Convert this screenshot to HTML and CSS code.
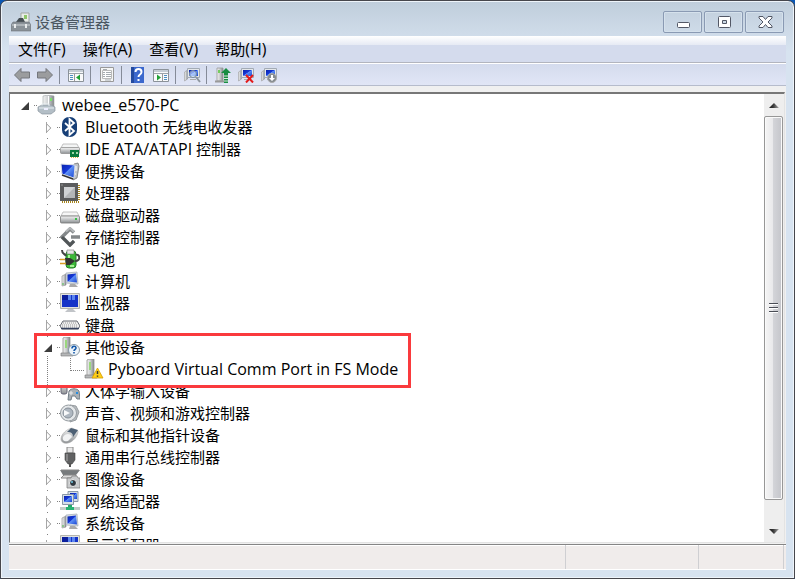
FILE: index.html
```html
<!DOCTYPE html>
<html lang="zh-CN">
<head>
<meta charset="utf-8">
<title>设备管理器</title>
<link rel="stylesheet" href="styles.css">
</head>
<body>
<svg class="defs" aria-hidden="true">
  <defs>
    <linearGradient id="metal" x1="0" x2="1"><stop stop-color="#f4f4f4"/><stop offset=".5" stop-color="#c8cbcd"/><stop offset="1" stop-color="#84888b"/></linearGradient>
    <linearGradient id="metalDown" x2="0" y2="1"><stop stop-color="#f6f6f6"/><stop offset="1" stop-color="#8d9194"/></linearGradient>
    <linearGradient id="screen" x1="0" y1="0" x2="1" y2="1"><stop stop-color="#0923a8"/><stop offset=".45" stop-color="#1638d8"/><stop offset=".5" stop-color="#5d8ff5"/><stop offset="1" stop-color="#1a46d2"/></linearGradient>
    <linearGradient id="arrowHead" x1="0" x2="1"><stop stop-color="#222"/><stop offset=".4" stop-color="#333"/><stop offset="1" stop-color="#aaa"/></linearGradient>
    <symbol id="i-pc" viewBox="0 0 20 20"><path d="M6 1l5-1 6 1v13l-5 1-6-2z" fill="url(#metal)" stroke="#a0a4a6" stroke-width=".6"/><path d="M11.500 1v12" stroke="#fff"/><path d="M13 3h2v3h-2z" fill="#7be06c"/><path d="M1 12l4-2h9l4 2v4l-4 3H5l-4-3z" fill="#b3bec6" stroke="#8b959d" stroke-width=".7"/><path d="M2 13h15M5 10.500V9h7v2" stroke="#e8eef2" fill="none"/><path d="M7 13h4v2H7z" fill="#eef"/></symbol>
    <symbol id="i-bt" viewBox="0 0 20 20"><rect x="2" y="0" width="15" height="20" rx="7" fill="#173f77"/><path d="M5 6l9 8-4.500 4V2L14 6l-9 8" fill="none" stroke="#fff" stroke-width="1.800"/></symbol>
    <symbol id="i-ide" viewBox="0 0 20 20"><path d="M3 5h14l2 4H1z" fill="#f4f5f5" stroke="#aaa" stroke-width=".7"/><rect x=".500" y="8.500" width="19" height="6" rx="1" fill="url(#metalDown)" stroke="#888" stroke-width=".7"/><path d="M10 11h9v7h-9z" fill="#087a3c"/><path d="M12 13h2v2h-2zM16 13h2v2h-2z" fill="#9ed6a8"/><path d="M11 18.500h7" stroke="#dbb54b" stroke-dasharray="1 1"/></symbol>
    <symbol id="i-portable" viewBox="0 0 20 20"><path d="M14 3l4-1 1 3-2 12-4 2z" fill="#bfc3c6" stroke="#666" stroke-width=".7"/><path d="M1 3l14 1-1 13-12-4z" fill="url(#screen)" stroke="#d9dde4"/><path d="M2 14l11 4" stroke="#333" stroke-width="1.500"/><path d="M16 5v5M15 13h1" stroke="#fff"/></symbol>
    <symbol id="i-cpu" viewBox="0 0 20 20"><path d="M2 19h17M19 2v16" stroke="#a7861f" stroke-width="2" stroke-dasharray="1 1"/><path d="M0 0h18v18H0z" fill="#5b5c5d"/><path d="M4 4h11v11H4z" fill="#b4b6b8"/><path d="M4 15V4h11z" fill="#d0d2d4"/><path d="M1 1h2v2H1z" fill="#777"/></symbol>
    <symbol id="i-disk" viewBox="0 0 20 20"><path d="M3 7h14l2 4H1z" fill="#f6f6f6" stroke="#aaa" stroke-width=".7"/><rect x=".500" y="11" width="19" height="7" rx="1" fill="url(#metalDown)" stroke="#777" stroke-width=".8"/><path d="M15 13h2v2h-2z" fill="#39bd49"/></symbol>
    <symbol id="i-storage" viewBox="0 0 20 20"><path d="M14 5.500L10 2l-8 8 8 8 4-4M11 10h9" fill="none" stroke="#84888a" stroke-width="3.500"/><path d="M2 10l8 8 4-4" fill="none" stroke="#515658" stroke-width="3"/><path d="M6 4.500L10 1l4 4" fill="none" stroke="#b4b7b9" stroke-width="2"/></symbol>
    <symbol id="i-battery" viewBox="0 0 20 20"><rect x="6" y="2" width="10" height="17" rx="3" fill="#3cb838" stroke="#277f28"/><path d="M7 1h7v4H7z" fill="#e8e8e8" stroke="#777" stroke-width=".6"/><path d="M9 6v4M10 17h4" stroke="#a5f293" stroke-width="2"/><path d="M2 1c0 5 3 3 4 6M15 12c7 0 4-8 1-6" fill="none" stroke="#444" stroke-width="2"/><path d="M5 9h5l5 3-5 4H6z" fill="#333"/><path d="M0 10.500h5M0 14.500h6" stroke="#d89c23" stroke-width="1.500"/></symbol>
    <symbol id="i-computer" viewBox="0 0 20 20"><path d="M2 5l4-2v11l-4 1z" fill="url(#metal)" stroke="#888" stroke-width=".6"/><path d="M6 2l11-1 1 12-12-1z" fill="#d8dde2" stroke="#a0aab5" stroke-width=".7"/><path d="M7.500 3.500l8.500-1 1 9-9.500-1z" fill="url(#screen)"/><path d="M10 13h5l3 3H9z" fill="#aaa"/><path d="M3 12v2" stroke="#48b848"/></symbol>
    <symbol id="i-monitor" viewBox="0 0 20 20"><path d="M.500.500h19v15H.500z" fill="#e3e3df" stroke="#b4b5af"/><path d="M2 2h16v12H2z" fill="#1634c8"/><path d="M2 2h6v5H2z" fill="#0c1f9c"/><path d="M8 2h7v5H8z" fill="#5c86ee"/><path d="M11 2h1v5h-1z" fill="#1634c8"/><path d="M8 16h5l3 3H5z" fill="#c1c4c8"/></symbol>
    <symbol id="i-keyboard" viewBox="0 0 20 20"><path d="M3 6h14l3 5-2 3H2l-2-3z" fill="#eee" stroke="#676b73"/><path d="M3 8h14M2 10h16M2 12h16" stroke="#999" stroke-dasharray="1 1"/><path d="M1 13.500h18" stroke="#35415d" stroke-width="1.500"/></symbol>
    <symbol id="i-tower" viewBox="0 0 20 20"><path d="M3 1l2-1h5v17H3z" fill="url(#metal)" stroke="#909090" stroke-width=".8"/><path d="M5 3h2v8H5z" fill="#9bd77f"/><path d="M1 16h12v3H1z" fill="#b5b7b8" stroke="#777" stroke-width=".6"/></symbol>
    <symbol id="i-unknown" viewBox="0 0 20 20"><use href="#i-tower"/><circle cx="14" cy="13" r="5.500" fill="#edf4fa" stroke="#8998a5"/><path d="M12 11.500c0-3 4-3 4-.500 0 1.500-2 1.500-2 3M14 15v1.500" fill="none" stroke="#1559aa" stroke-width="1.600"/></symbol>
    <symbol id="i-warning" viewBox="0 0 20 20"><use href="#i-tower"/><path d="M13.500 9L19 19H8z" fill="#ffcf18" stroke="#d69c00" stroke-width=".8"/><path d="M13.500 12v3M13.500 16.500v1.300" stroke="#333" stroke-width="1.500"/></symbol>
    <symbol id="i-hid" viewBox="0 0 20 20"><rect x="1" y="1" width="6" height="12" rx="2" fill="url(#metalDown)" stroke="#667"/><path d="M4 0v6" stroke="#445" stroke-width="2"/><path d="M9 10c2-3 8-3 10 0l1 8h-3l-2-3h-3l-1 4H8z" fill="#a9b0b6" stroke="#737e87"/><path d="M11 10v4M9 12h4" stroke="#eee"/><path d="M16 12h2" stroke="#278ee1" stroke-width="2"/></symbol>
    <symbol id="i-speaker" viewBox="0 0 20 20"><path d="M10 2l6 1 3 6-3 8-6 2z" fill="#b8bcc0" stroke="#979ca0"/><circle cx="8.500" cy="10" r="8" fill="#e4e7e9" stroke="#969ca1"/><circle cx="8" cy="10" r="5" fill="#aeb7c0" stroke="#858e97"/><path d="M4 7l6 3-6 3z" fill="#f8f9fa"/></symbol>
    <symbol id="i-mouse" viewBox="0 0 20 20"><path d="M1 14C1 9 7 4 12 3l6 3c0 5-5 11-10 12-4 1-7-1-7-4z" fill="url(#metalDown)" stroke="#aaa" stroke-width=".6"/><path d="M11 3l7 2-5 7c0-4-2-5-6-5z" fill="#4d6074"/><path d="M3 12c2-4 8-4 9 0l-4 4c-3 1-6 0-5-4z" fill="#f2f3f4"/></symbol>
    <symbol id="i-usb" viewBox="0 0 20 20"><path d="M7 0h6v6H7z" fill="#e7e7e7" stroke="#888"/><path d="M5 6h10v7l-3 4H8l-3-4z" fill="#606162" stroke="#444" stroke-width=".6"/><path d="M7 7v7" stroke="#aaa"/><path d="M10 16v4" stroke="#555" stroke-width="2"/></symbol>
    <symbol id="i-imaging" viewBox="0 0 20 20"><path d="M0 1h20l-4 5H3z" fill="#777b7d"/><path d="M1 1h18M4 6h12v3H1z" fill="#ddd" stroke="#888"/><path d="M7 9h4l1-2h5l1 2h2v10H7z" fill="#c9cbcc" stroke="#777" stroke-width=".7"/><circle cx="13" cy="14" r="3.500" fill="#303940" stroke="#eee"/><circle cx="12" cy="13" r="1" fill="#72c8e3"/></symbol>
    <symbol id="i-network" viewBox="0 0 20 20"><path d="M8 .500h10v10H8z" fill="#d6dfe7" stroke="#8997a7"/><path d="M10 2h7v6h-7z" fill="url(#screen)"/><path d="M2.500 3.500h11v10h-11z" fill="#d6dfe7" stroke="#8997a7"/><path d="M4 5h8v6H4z" fill="url(#screen)"/><path d="M8 14h4v4H8z" fill="#25a968"/><path d="M0 17.500h20" stroke="#c2cbc7" stroke-width="3"/><path d="M6 17.500h8" stroke="#28b373" stroke-width="3"/></symbol>
    <symbol id="i-panel" viewBox="0 0 18 16"><path d="M1.500 2.500h15v12h-15z" fill="#f9fafb" stroke="#8b9299"/><path d="M2 3h14v2H2z" fill="#c5cdd5"/><path d="M2 6.500h14" stroke="#9ba3aa"/></symbol>
    <symbol id="i-station" viewBox="0 0 18 16"><path d="M1.500 5l3-2v9l-3 2z" fill="url(#metal)" stroke="#999" stroke-width=".6"/><path d="M4.500 1.500h12v9h-12z" fill="#e4e7ea" stroke="#a3abb5"/><path d="M6 3h9v6H6z" fill="url(#screen)"/><path d="M7 12h6v1H7z" fill="#aaa"/></symbol>
  </defs>
</svg>
<div class="window">
  <header class="titlebar">
    <svg class="app-icon" viewBox="0 0 20 20"><path d="M10 1h8v12h-8z" fill="#e9ece8" stroke="#a0a5a3"/><path d="M13 3h3v4h-3z" fill="#8fc66b"/><path d="M5 10l3-4h4l2 4" fill="#454e53"/><path d="M2 10h16l2 3v6H0v-6z" fill="#8a9298" stroke="#6c747a" stroke-width=".6"/><path d="M1 13h18" stroke="#d0d5d8"/><path d="M4 12v4M15 12v4" stroke="#e8ebec" stroke-width="2"/></svg>
    <h1>设备管理器</h1>
    <div class="controls">
      <button aria-label="最小化"><svg viewBox="0 0 20 20"><rect x="4.500" y="10.500" width="12" height="5" rx="1" fill="#fff" stroke="#535866"/></svg></button>
      <button aria-label="最大化"><svg viewBox="0 0 20 20"><rect x="4.500" y="4.500" width="12" height="11" rx="1" fill="#fff" stroke="#535866"/><path d="M8.500 8.500h4v3h-4z" fill="#cbd9e5" stroke="#535866"/></svg></button>
      <button aria-label="关闭"><svg viewBox="0 0 20 20"><path d="M4 4.500h4l2.500 3 2.500-3h4v1.500L13 10l4 4v1.500h-4l-2.500-3-2.500 3H4V14l4-4-4-4z" fill="#fff" stroke="#535866"/></svg></button>
    </div>
  </header>
  <main class="client">
    <nav class="menu"><button>文件<span class="latin">(F)</span></button><button>操作<span class="latin">(A)</span></button><button>查看<span class="latin">(V)</span></button><button>帮助<span class="latin">(H)</span></button></nav>
    <div class="toolbar">
      <button aria-label="后退"><svg viewBox="0 0 18 16"><path d="M1.500 8L8 1.500V5h8.500v6H8v3.500z" fill="#9b9c9e" stroke="#74777c"/></svg></button>
      <button aria-label="前进"><svg viewBox="0 0 18 16"><path d="M16.500 8L10 1.500V5H1.500v6H10v3.500z" fill="#9b9c9e" stroke="#74777c"/></svg></button>
      <i></i>
      <button aria-label="显示控制台树"><svg viewBox="0 0 18 16"><use href="#i-panel"/><path d="M7.500 7v7" stroke="#999"/><path d="M3 8.500h3M3 10.500h3M3 12.500h3" stroke="#4b8fc2"/><path d="M13 7.500v6l-4-3z" fill="#21a135"/></svg></button>
      <i></i>
      <button aria-label="属性"><svg viewBox="0 0 18 16"><path d="M2.500 .500h13v14h-13z" fill="#f5f6f6" stroke="#999"/><path d="M4.500 3.500h9v8h-9z" fill="#fff" stroke="#bbb"/><path d="M5 2.500h4M8 5.500h5M8 7.500h5M8 9.500h5M5 5.500h2M5 7.500h2M5 9.500h2M7 13h6" stroke="#a5abb0"/></svg></button>
      <i></i>
      <button aria-label="帮助"><svg viewBox="0 0 18 16"><path d="M2 0h13v16H2z" fill="#3b68cd"/><path d="M2 0h3v16H2z" fill="#234a9f"/><path d="M6.500 5c0-4 6-4 6 0 0 3-3 2-3 5M9.500 12v2" fill="none" stroke="#fff" stroke-width="2"/></svg></button>
      <button aria-label="操作窗格"><svg viewBox="0 0 18 16"><use href="#i-panel"/><path d="M10.500 7v7" stroke="#999"/><path d="M12 8.500h3M12 10.500h3M12 12.500h3" stroke="#4b8fc2"/><path d="M5 7.500v6l4-3z" fill="#21a135"/></svg></button>
      <i></i>
      <button aria-label="扫描检测硬件改动"><svg viewBox="0 0 18 16"><use href="#i-station"/><circle cx="10" cy="7" r="3.500" fill="#dceeff" fill-opacity=".6" stroke="#778a9d"/><path d="M13 10l4 5" stroke="#8d969e" stroke-width="2"/></svg></button>
      <i></i>
      <button aria-label="更新驱动程序"><svg viewBox="0 0 18 16"><path d="M3 1h6v13H3z" fill="url(#metal)" stroke="#999" stroke-width=".8"/><path d="M4 3h2v3H4z" fill="#74cc60"/><path d="M1 14.500h10" stroke="#999" stroke-width="2"/><path d="M12 1l5 5h-3v10h-4V6H7z" fill="#188c42"/><path d="M10 9h4M10 11.500h4M10 14h4" stroke="#d8ead8"/></svg></button>
      <button aria-label="卸载"><svg viewBox="0 0 18 16"><use href="#i-station"/><path d="M9 8l7 7.500M16 8l-7 7.500" stroke="#e31b1b" stroke-width="2"/></svg></button>
      <button aria-label="禁用"><svg viewBox="0 0 18 16"><use href="#i-station"/><circle cx="12" cy="11" r="4.500" fill="#858b90" stroke="#aaa"/><path d="M11 8h2v3h2l-3 3-3-3h2z" fill="#fff"/></svg></button>
    </div>
    <section class="view">
      <div class="tree">
        <div class="row root"><button class="twist open" aria-label="折叠"></button><svg><use href="#i-pc"/></svg><span class="latin">webee_e570-PC</span></div>
        <ul>
          <li class="row"><button class="twist" aria-label="展开"></button><svg><use href="#i-bt"/></svg><span><span class="latin">Bluetooth</span> 无线电收发器</span></li>
          <li class="row"><button class="twist" aria-label="展开"></button><svg><use href="#i-ide"/></svg><span><span class="latin">IDE ATA/ATAPI</span> 控制器</span></li>
          <li class="row"><button class="twist" aria-label="展开"></button><svg><use href="#i-portable"/></svg><span>便携设备</span></li>
          <li class="row"><button class="twist" aria-label="展开"></button><svg><use href="#i-cpu"/></svg><span>处理器</span></li>
          <li class="row"><button class="twist" aria-label="展开"></button><svg><use href="#i-disk"/></svg><span>磁盘驱动器</span></li>
          <li class="row"><button class="twist" aria-label="展开"></button><svg><use href="#i-storage"/></svg><span>存储控制器</span></li>
          <li class="row"><button class="twist" aria-label="展开"></button><svg><use href="#i-battery"/></svg><span>电池</span></li>
          <li class="row"><button class="twist" aria-label="展开"></button><svg><use href="#i-computer"/></svg><span>计算机</span></li>
          <li class="row"><button class="twist" aria-label="展开"></button><svg><use href="#i-monitor"/></svg><span>监视器</span></li>
          <li class="row"><button class="twist" aria-label="展开"></button><svg><use href="#i-keyboard"/></svg><span>键盘</span></li>
          <li class="group">
            <div class="row"><button class="twist open" aria-label="折叠"></button><svg><use href="#i-unknown"/></svg><span>其他设备</span></div>
            <div class="row child"><svg><use href="#i-warning"/></svg><span class="latin">Pyboard Virtual Comm Port in FS Mode</span></div>
          </li>
          <li class="row"><button class="twist" aria-label="展开"></button><svg><use href="#i-hid"/></svg><span>人体学输入设备</span></li>
          <li class="row"><button class="twist" aria-label="展开"></button><svg><use href="#i-speaker"/></svg><span>声音、视频和游戏控制器</span></li>
          <li class="row"><button class="twist" aria-label="展开"></button><svg><use href="#i-mouse"/></svg><span>鼠标和其他指针设备</span></li>
          <li class="row"><button class="twist" aria-label="展开"></button><svg><use href="#i-usb"/></svg><span>通用串行总线控制器</span></li>
          <li class="row"><button class="twist" aria-label="展开"></button><svg><use href="#i-imaging"/></svg><span>图像设备</span></li>
          <li class="row"><button class="twist" aria-label="展开"></button><svg><use href="#i-network"/></svg><span>网络适配器</span></li>
          <li class="row"><button class="twist" aria-label="展开"></button><svg><use href="#i-computer"/></svg><span>系统设备</span></li>
          <li class="row"><button class="twist" aria-label="展开"></button><svg><use href="#i-monitor"/></svg><span>显示适配器</span></li>
        </ul>
      </div>
      <div class="scrollbar">
        <button class="step" aria-label="向上滚动"><svg viewBox="0 0 10 5"><path d="M5 0l5 5H0z" fill="url(#arrowHead)"/></svg></button>
        <div class="track"><div class="thumb"><b></b><b></b><b></b></div></div>
        <button class="step" aria-label="向下滚动"><svg viewBox="0 0 10 5"><path d="M5 5l5-5H0z" fill="url(#arrowHead)"/></svg></button>
      </div>
    </section>
    <footer class="status"><span></span><span></span><span></span></footer>
  </main>
</div>
</body>
</html>
```
FILE: styles.css
```css
* { box-sizing: border-box; }
body {
  margin: 0;
  background: #0a57b5;
  color: #000;
  font: 15px/22px "Open Sans", "Noto Sans CJK SC", sans-serif;
}
button { margin: 0; padding: 0; border: 0; background: none; color: inherit; font: inherit; }
svg { display: block; flex: none; }
.defs { position: absolute; width: 0; height: 0; }
.latin { font-size: 16px; line-height: 20px; }

.window {
  display: flex;
  flex-direction: column;
  height: 100vh;
  padding: 0 8px 8px;
  border: 1px solid #46464c;
  border-radius: 7px 7px 0 0;
  background: linear-gradient(#bfcddb, #d7e3f0 50px);
  box-shadow: inset 0 0 0 1px #eef4fa;
}
.titlebar { display: flex; align-items: center; flex: none; height: 35px; padding: 6px 0 0 2px; }
.app-icon { width: 20px; height: 20px; }
h1 { margin: 0 0 0 4px; color: #4b5762; font-size: 15px; font-weight: 400; }
.controls { display: flex; gap: 2px; align-self: flex-start; margin: 4px 2px 0 auto; }
.controls button {
  display: grid;
  place-items: center;
  width: 39px;
  height: 22px;
  border: 1px solid #8a9ab3;
  border-radius: 2px;
  box-shadow: inset 0 0 0 1px #d5e1ec;
}
.controls svg { width: 20px; height: 20px; }

.client { display: flex; flex: 1; flex-direction: column; min-height: 0; background: #f0f0f0; }
.menu {
  display: flex;
  flex: none;
  gap: 17px;
  height: 27px;
  padding: 0 9px;
  border-bottom: 1px solid #b2b5be;
  background: linear-gradient(#fff, #e6eaf4 9px, #d4dbed 9px);
}
.toolbar {
  display: flex;
  flex: none;
  align-items: center;
  gap: 5px;
  height: 23px;
  padding: 0 4px;
  border-top: 1px solid #fff;
  border-bottom: 1px solid #b6bccc;
  background: linear-gradient(#d4dbed, #e1e6f6);
}
.toolbar svg { width: 18px; height: 16px; }
.toolbar i { width: 1px; height: 18px; margin-right: 2px; background: #858b98; }

.view {
  display: flex;
  flex: 1;
  min-height: 0;
  margin: 6px 1px 1px 0;
  border: 1px solid #777;
  border-top-width: 2px;
  border-right-color: #e3e3e3;
  border-bottom-color: #e3e3e3;
  background: #fff;
}
.tree { flex: 1; min-width: 0; overflow: hidden; }
ul { margin: 0; padding: 0 0 0 23px; list-style: none; }
.row { position: relative; display: flex; align-items: center; height: 22px; padding-left: 10px; white-space: nowrap; }
.row svg { width: 20px; height: 20px; margin-left: 6px; }
.row > span { margin-left: 5px; }

/* Expander arrows; the ::after dots lead from the arrow to the icon */
.twist { position: relative; flex: none; width: 11px; height: 22px; }
.twist::before {
  content: "";
  position: absolute;
  top: 8px;
  left: -1px;
  width: 7px;
  height: 7px;
  border: 1px solid #a6a6a6;
  border-width: 1px 1px 0 0;
  transform: rotate(45deg);
}
.twist:not(.open) {
  background: linear-gradient(#a6a6a6, #a6a6a6) 3px 6px / 1px 11px no-repeat;
}
.twist:not(.open)::before { clip-path: polygon(0 0, 100% 0, 100% 100%); }
.twist.open::before {
  left: 1px;
  border: 0;
  width: 8px;
  height: 8px;
  background: #3c3c3c;
  clip-path: polygon(100% 0, 100% 100%, 0 100%);
  transform: none;
}
.twist::after {
  content: "";
  position: absolute;
  top: 11px;
  left: 14px;
  width: 3px;
  border-top: 1px dotted #808080;
}
li.row::before, .group > .row:first-child::before {
  content: "";
  position: absolute;
  top: 0;
  left: 14px;
  width: 1px;
  height: 1px;
  background: #808080;
}

/* Highlighted branch: the frame lies over the neighbouring rows */
.group { position: relative; z-index: 1; width: fit-content; }
.group::before {
  content: "";
  position: absolute;
  z-index: -1;
  inset: -3px -13px -8px 1px;
  border: 3px solid #fa3a3d;
  background: #fff;
}
.group::after {
  content: "";
  position: absolute;
  top: 20px;
  bottom: -5px;
  left: 14px;
  border-left: 1px dotted #808080;
}
.child { padding-left: 45px; }
.child > span { margin-left: 4px; }
.child::before {
  content: "";
  position: absolute;
  top: 0;
  left: 37px;
  width: 13px;
  height: 12px;
  border: 1px dotted #808080;
  border-width: 0 0 1px 1px;
}

.scrollbar { display: flex; flex: none; flex-direction: column; width: 20px; padding-right: 1px; background: #eee; }
.step { display: grid; place-items: center; flex: none; height: 22px; }
.step svg { width: 10px; height: 5px; }
.track { flex: 1; min-height: 0; }
.thumb {
  display: flex;
  flex-direction: column;
  align-items: center;
  justify-content: center;
  gap: 2px;
  height: 95%;
  border: 1px solid #979797;
  border-radius: 2px;
  background: linear-gradient(90deg, #f5f5f5, #e9e9eb 45%, #d3d4d8 50%, #c4c5ca);
  box-shadow: inset 0 0 0 1px #fafafa;
}
.thumb b { width: 9px; height: 2px; border-top: 1px solid #4a4d55; background: #fff; }

.status {
  display: grid;
  grid-template-columns: 1fr 133px 85px;
  flex: none;
  height: 26px;
  padding-right: 2px;
  border-top: 1px solid #858585;
  border-bottom: 1px solid #fff;
  background: #f0eceb;
  box-shadow: inset 0 1px #fff;
}
.status span { border-right: 1px solid #cfcfd2; }
```
